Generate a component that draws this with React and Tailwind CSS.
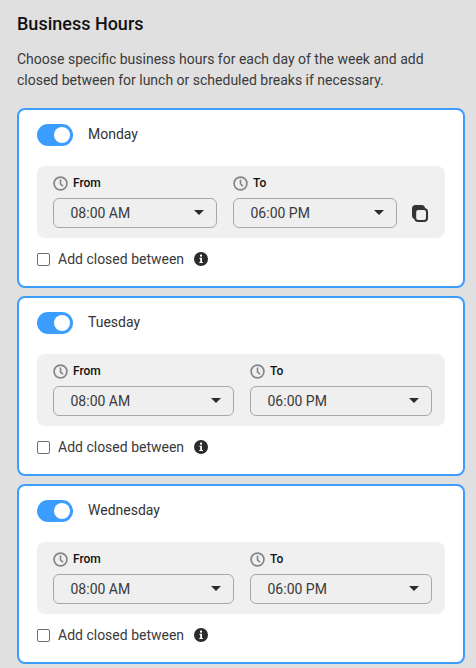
import React from "react";

function Clock() {
  return (
    <svg width="15" height="15" viewBox="0 0 15 15" fill="none" className="shrink-0">
      <circle cx="7.5" cy="7.5" r="6.4" stroke="#858585" strokeWidth="1.7" />
      <path d="M7.5 3.5V7.8L10 10.3" stroke="#858585" strokeWidth="1.6" />
    </svg>
  );
}

function Info() {
  return (
    <svg width="14" height="14" viewBox="0 0 14 14" className="shrink-0">
      <circle cx="7" cy="7" r="7" fill="#2b2b2b" />
      <rect x="6" y="2.6" width="2" height="2" fill="#fff" />
      <path d="M5.4 5.8H8V10H9V11H5.2V10H6.2V6.8H5.4Z" fill="#fff" />
    </svg>
  );
}

function Copy() {
  return (
    <svg width="16" height="17" viewBox="0 0 16 17" className="shrink-0">
      <rect x="0" y="0" width="13" height="14" rx="3.5" fill="#333" />
      <rect x="3.2" y="4" width="11.8" height="12" rx="3" fill="#f0f0f0" stroke="#333" strokeWidth="2" />
    </svg>
  );
}

function Select({ value }) {
  return (
    <div className="h-[30px] flex items-center justify-between border border-[#a8a8a8] rounded-[6px] pl-[16.5px] pr-[12px] bg-[#efefef]">
      <span className="text-[14px] text-[#3a3a3a]">{value}</span>
      <span className="w-0 h-0 border-l-[5px] border-r-[5px] border-t-[5px] border-l-transparent border-r-transparent border-t-[#2b2b2b] -mt-[2px]" />
    </div>
  );
}

function Field({ label, value, className }) {
  return (
    <div className={className}>
      <div className="flex items-center gap-[5px] h-[16px] mb-[7px]">
        <Clock />
        <span className="text-[12px] font-medium text-[#111]">{label}</span>
      </div>
      <Select value={value} />
    </div>
  );
}

function Day({ name, copy }) {
  return (
    <div className="h-[180px] bg-white border-2 border-[#3b9dff] rounded-[8px] px-[18px] pt-[14px]">
      <div className="flex items-center h-[22px]">
        <div className="w-[36px] h-[22px] rounded-full bg-[#3b9dff] relative">
          <div className="absolute right-[3px] top-[3px] w-[16px] h-[16px] rounded-full bg-white" />
        </div>
        <span className="ml-[15px] text-[14px] text-[#333] -mt-[1px]">{name}</span>
      </div>
      <div className="mt-[20px] h-[72px] bg-[#f0f0f0] rounded-[8px] pl-[16px] pr-[13px] pt-[9px] flex items-start">
        <Field label="From" value="08:00 AM" className={copy ? "w-[164px]" : "w-[181px]"} />
        <Field label="To" value="06:00 PM" className={copy ? "w-[164px] ml-[16px]" : "w-[182px] ml-[16px]"} />
        {copy && (
          <div className="ml-[15px] mt-[30px]">
            <Copy />
          </div>
        )}
      </div>
      <div className="flex items-center mt-[12px] h-[18px]">
        <div className="w-[13px] h-[13px] border border-[#6e6e6e] rounded-[2px] bg-white" />
        <span className="ml-[8px] text-[14px] text-[#3a3a3a]">Add closed between</span>
        <span className="ml-[10px]">
          <Info />
        </span>
      </div>
    </div>
  );
}

export default function App() {
  return (
    <div className="w-[476px] h-[668px] overflow-hidden bg-[#e0e0e0] pl-[17px] pr-[11px] pt-[13px] font-['Roboto',sans-serif]">
      <h1 className="text-[18px] leading-[22px] font-medium text-[#111]">Business Hours</h1>
      <p className="mt-[14px] text-[14px] leading-[21px] text-[#3a3a3a]">
        Choose specific business hours for each day of the week and add closed between for lunch or scheduled breaks if necessary.
      </p>
      <div className="mt-[17px] flex flex-col gap-[8px]">
        <Day name="Monday" copy />
        <Day name="Tuesday" />
        <Day name="Wednesday" />
      </div>
    </div>
  );
}
